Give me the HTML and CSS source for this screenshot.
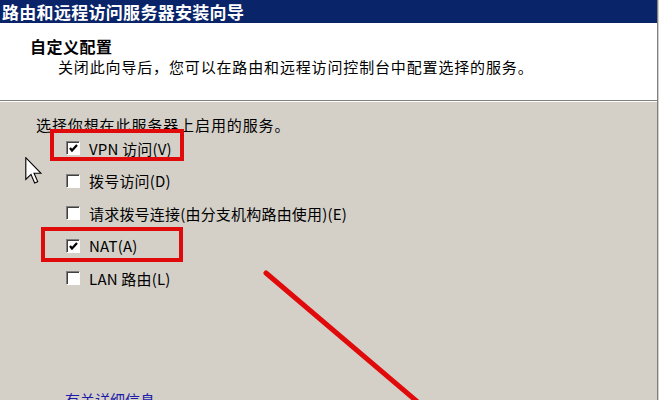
FILE: index.html
```html
<!DOCTYPE html>
<html lang="zh-CN">
<head>
<meta charset="utf-8">
<title>路由和远程访问服务器安装向导</title>
<link rel="stylesheet" href="styles.css">
</head>
<body>
<div class="window">
  <div class="titlebar">路由和远程访问服务器安装向导</div>
  <div class="header">
    <div class="h-title">自定义配置</div>
    <div class="h-sub">关闭此向导后，您可以在路由和远程访问控制台中配置选择的服务。</div>
  </div>
  <div class="content">
    <div class="prompt">选择你想在此服务器上启用的服务。</div>
    <ul class="options">
      <li class="opt"><span class="cb"><svg viewBox="0 0 11 11" class="tick"><path d="M2 5 L4 7.5 L9 2" /></svg></span><span>VPN 访问(V)</span></li>
      <li class="opt"><span class="cb"></span><span>拨号访问(D)</span></li>
      <li class="opt"><span class="cb"></span><span>请求拨号连接(由分支机构路由使用)(E)</span></li>
      <li class="opt"><span class="cb"><svg viewBox="0 0 11 11" class="tick"><path d="M2 5 L4 7.5 L9 2" /></svg></span><span>NAT(A)</span></li>
      <li class="opt"><span class="cb"></span><span>LAN 路由(L)</span></li>
    </ul>
    <a class="more" href="#">有关详细信息</a>
  </div>

  <div class="mark mark-vpn"></div>
  <div class="mark mark-nat"></div>
  <svg class="arrow-line" viewBox="0 0 659 400" width="659" height="400">
    <line x1="266" y1="273" x2="420" y2="404" />
  </svg>
  <svg class="cursor" viewBox="0 0 12 20" width="17" height="28">
    <path d="M0.5 0.5 L0.5 16 L4.2 12.4 L6.8 18.6 L9 17.6 L6.4 11.6 L11.4 11.6 Z" />
  </svg>
</div>
</body>
</html>
```

FILE: styles.css
```css
* {
  box-sizing: border-box;
}

html, body {
  margin: 0;
  padding: 0;
  background: #d4d0c8;
}

body {
  font-family: "Noto Sans CJK SC", "Noto Sans", sans-serif;
  color: #000;
  overflow: hidden;
}

.window {
  position: relative;
  width: 658px;
  height: 400px;
  border-right: 1px solid #808080;
  background: #d4d0c8;
  overflow: hidden;
}

.titlebar {
  height: 23px;
  line-height: 23px;
  background: #0a246a;
  color: #fff;
  font-weight: bold;
  font-size: 17px;
  padding-left: 2px;
  letter-spacing: 0.3px;
  white-space: nowrap;
}

.header {
  height: 78px;
  background: #fff;
  border-bottom: 1px solid #808080;
  box-shadow: 0 1px 0 #fff;
  padding-top: 13px;
}

.h-title {
  padding-left: 30px;
  font-size: 16px;
  font-weight: bold;
  line-height: 20px;
  letter-spacing: 0.5px;
}

.h-sub {
  padding-left: 58px;
  font-size: 15px;
  line-height: 20px;
  margin-top: 1px;
  letter-spacing: 0.85px;
}

.content {
  padding-top: 15px;
  padding-left: 36px;
}

.prompt {
  font-size: 15px;
  line-height: 18px;
  letter-spacing: 0.9px;
}

.options {
  list-style: none;
  margin: -2px 0 0 0;
  padding: 0 0 0 30px;
}

.opt {
  height: 32.5px;
  display: flex;
  align-items: center;
  gap: 9px;
  font-size: 15px;
  letter-spacing: 0.2px;
  white-space: nowrap;
}

.cb {
  width: 14px;
  height: 14px;
  flex: none;
  background: #fff;
  border: 1px solid;
  border-color: #808080 #fff #fff #808080;
  box-shadow: inset 1px 1px 0 #404040;
  display: flex;
  align-items: center;
  justify-content: center;
}

.tick {
  width: 11px;
  height: 11px;
  margin: 1px 0 0 1px;
}

.tick path {
  fill: none;
  stroke: #000;
  stroke-width: 2.2;
}

.more {
  display: inline-block;
  margin-top: 96px;
  margin-left: 29px;
  font-size: 15px;
  line-height: 18px;
  color: #1c1ca8;
  text-decoration: underline;
}

.mark {
  position: absolute;
  border: 4px solid #e00a0a;
}

.mark-vpn {
  left: 50px;
  top: 129px;
  width: 134px;
  height: 32px;
}

.mark-nat {
  left: 41px;
  top: 227px;
  width: 142px;
  height: 35px;
}

.arrow-line {
  position: absolute;
  left: 0;
  top: 0;
  pointer-events: none;
}

.arrow-line line {
  stroke: #e00a0a;
  stroke-width: 5;
  stroke-linecap: round;
}

.cursor {
  position: absolute;
  left: 25px;
  top: 157px;
}

.cursor path {
  fill: #fff;
  stroke: #000;
  stroke-width: 0.8;
  stroke-linejoin: miter;
}
```
